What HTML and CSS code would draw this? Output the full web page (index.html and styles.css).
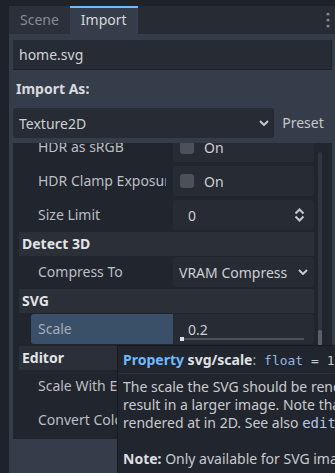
FILE: index.html
```html
<!DOCTYPE html>
<html lang="en">
<head>
  <meta charset="UTF-8">
  <title>Import dock</title>
  <link rel="stylesheet" href="styles.css">
</head>
<body>

  <div class="dock">
    <div class="tabbar">
      <div class="tab">Scene</div>
      <div class="tab active">Import</div>
      <div class="tab-menu">
        <svg width="14" height="28" viewBox="0 0 14 28">
          <circle cx="7" cy="8" r="1.6" fill="#7f848c"/>
          <circle cx="7" cy="14" r="1.6" fill="#7f848c"/>
          <circle cx="7" cy="20" r="1.6" fill="#7f848c"/>
        </svg>
      </div>
    </div>

    <div class="import-body">
      <div class="file-field">home.svg</div>
      <div class="import-as">Import As:</div>

      <div class="type-row">
        <div class="select">
          <span>Texture2D</span>
          <svg class="chevron" width="10" height="6" viewBox="0 0 10 6"><path d="M1 1 L5 5 L9 1" /></svg>
        </div>
        <div class="preset-btn">Preset</div>
      </div>

      <div class="inspector">
        <div class="prop-list">
          <div class="prop">
            <div class="prop-name"><span>HDR as sRGB</span></div>
            <div class="prop-value check-value"><span class="checkbox"></span>On</div>
          </div>
          <div class="prop">
            <div class="prop-name"><span>HDR Clamp Exposure</span></div>
            <div class="prop-value check-value"><span class="checkbox"></span>On</div>
          </div>
          <div class="prop">
            <div class="prop-name"><span>Size Limit</span></div>
            <div class="prop-value spin-value">
              <span>0</span>
              <svg class="updown" width="11" height="14" viewBox="0 0 11 14"><path d="M1.5 5.5 L5.5 1.5 L9.5 5.5 M1.5 8.5 L5.5 12.5 L9.5 8.5" /></svg>
            </div>
          </div>

          <div class="section">Detect 3D</div>
          <div class="prop">
            <div class="prop-name"><span>Compress To</span></div>
            <div class="prop-value option-value">
              <span>VRAM Compress</span>
              <svg class="chevron" width="10" height="6" viewBox="0 0 10 6"><path d="M1 1 L5 5 L9 1" /></svg>
            </div>
          </div>

          <div class="section">SVG</div>
          <div class="prop">
            <div class="prop-name hovered"><span>Scale</span></div>
            <div class="prop-value slider-value">
              <span>0.2</span>
              <div class="slider-track"><div class="slider-grab"></div></div>
            </div>
          </div>

          <div class="section">Editor</div>
          <div class="prop">
            <div class="prop-name"><span>Scale With Editor Scale</span></div>
            <div class="prop-value check-value"><span class="checkbox"></span>On</div>
          </div>
          <div class="prop">
            <div class="prop-name"><span>Convert Colors With Editor Theme</span></div>
            <div class="prop-value check-value"><span class="checkbox"></span>On</div>
          </div>
        </div>
        <div class="scrollbar"><div class="grabber"></div></div>
      </div>
    </div>
  </div>

  <div class="tooltip">
    <div class="tt-title">
      <span class="tt-kind">Property</span> <span class="tt-name">svg/scale</span><span class="tt-colon">:</span><span class="tt-code"> <span class="tt-type">float</span> = 1</span>
    </div>
    <div class="tt-body">
      The scale the SVG should be rendered at, with 1.0 being the original design size. Higher values<br>
      result in a larger image. Note that unlike font oversampling, this affects the size the SVG is<br>
      rendered at in 2D. See also <code>editor/scale_with_editor_scale</code>.<br>
      <br>
      <b>Note:</b> Only available for SVG images.
    </div>
  </div>

</body>
</html>
```

FILE: styles.css
```css
body {
  margin: 0;
  width: 335px;
  height: 473px;
  overflow: hidden;
  position: relative;
  background: #1e2229;
  color: #cdcfd2;
  font-family: "Noto Sans", sans-serif;
  font-size: 14px;
}

.dock {
  margin: 6px 0 0 9px;
  height: 467px;
  background: #363d4a;
}

/* tabs */

.tabbar {
  display: flex;
  height: 28px;
  background: #262b34;
}

.tab {
  padding: 0 11px;
  line-height: 28px;
  color: #868a91;
  background: #2b303a;
}

.tab.active {
  color: #d6d8db;
  background: #363d4a;
  box-shadow: inset 0 2px 0 #70bafa;
}

.tab-menu {
  margin-left: auto;
  width: 14px;
  height: 28px;
}

.tab-menu svg {
  display: block;
}

/* import header */

.import-body {
  padding: 6px 3px 0 4px;
}

.file-field {
  height: 30px;
  line-height: 30px;
  padding-left: 6px;
  background: #262b34;
  box-shadow: inset 0 -1px 0 #1d2128, inset -1px 0 0 #1d2128;
  color: #d2d4d7;
}

.import-as {
  line-height: 38px;
  padding-left: 3px;
  font-weight: bold;
  color: #d8dadd;
}

.type-row {
  display: flex;
  height: 30px;
}

.select {
  width: 261px;
  display: flex;
  align-items: center;
  justify-content: space-between;
  padding: 0 5px 0 6px;
  box-sizing: border-box;
  background: #262b34;
  border-radius: 3px;
}

.chevron path, .updown path {
  fill: none;
  stroke: #c8cacd;
  stroke-width: 2;
}

.preset-btn {
  flex: 1;
  text-align: center;
  line-height: 30px;
  color: #c5c7ca;
}

/* inspector */

.inspector {
  display: flex;
  height: 296px;
  margin-top: 5px;
  padding-left: 6px;
  overflow: hidden;
  background: #21252d;
}

.prop-list {
  flex: 1;
  align-self: flex-start;
  display: flex;
  flex-direction: column;
  margin-top: -13px;
}

.section {
  flex-shrink: 0;
  height: 24px;
  line-height: 24px;
  margin: 0 0 -1px;
  padding-left: 3px;
  background: #2a2f38;
  font-weight: bold;
  color: #e2e4e6;
}

.prop {
  flex-shrink: 0;
  display: flex;
  height: 30px;
  margin: 2px 0;
  padding-left: 12px;
}

.prop-name {
  width: 142px;
  flex-shrink: 0;
  padding: 0 7px;
  box-sizing: border-box;
  line-height: 30px;
  color: #bcbfc3;
}

.prop-name span {
  display: block;
  white-space: nowrap;
  overflow: hidden;
}

.prop-name.hovered {
  background: #3a5068;
  color: #a4adb8;
  border-radius: 3px 0 0 3px;
}

.prop-value {
  flex: 1;
  display: flex;
  align-items: center;
  background: #262b34;
  color: #cdcfd2;
  border-radius: 3px;
}

.check-value {
  padding-left: 7px;
  gap: 10px;
}

.checkbox {
  width: 14px;
  height: 14px;
  border-radius: 3px;
  background: #4b5059;
}

.spin-value {
  justify-content: space-between;
  padding: 0 9px 0 15px;
}

.option-value {
  justify-content: space-between;
  padding: 0 6px 0 6px;
}

.slider-value {
  position: relative;
  padding-left: 15px;
}

.slider-track {
  position: absolute;
  left: 7px;
  right: 10px;
  bottom: 4px;
  height: 2px;
  background: #4b5059;
}

.slider-grab {
  width: 4px;
  height: 4px;
  margin-top: -1px;
  background: #e0e0e0;
}

.scrollbar {
  width: 4px;
  margin: 9px 10px 3px 4px;
  display: flex;
  align-items: flex-end;
  background: #30353f;
  border-radius: 2px;
}

.grabber {
  width: 4px;
  height: 106px;
  background: #5a6069;
  border-radius: 2px;
}

/* tooltip */

.tooltip {
  position: absolute;
  left: 117px;
  top: 345px;
  width: 300px;
  height: 150px;
  background: #21252d;
  border: 1px solid #181b21;
}

.tt-title {
  height: 27px;
  line-height: 27px;
  padding-left: 5px;
  white-space: nowrap;
  border-bottom: 1px solid #2b3039;
}

.tt-kind {
  font-weight: bold;
  color: #70bafa;
}

.tt-name {
  font-weight: bold;
  color: #dfe1e3;
}

.tt-colon {
  color: #a6aaaf;
}

.tt-code {
  font-family: "DejaVu Sans Mono", monospace;
  font-size: 13px;
  color: #c4c7cb;
}

.tt-type {
  color: #8fb8e6;
}

.tt-body {
  padding: 4px 5px;
  line-height: 18px;
  white-space: nowrap;
  color: #c9cbce;
}

.tt-body code {
  font-family: "DejaVu Sans Mono", monospace;
  font-size: 14px;
  color: #b3c6ee;
}

.tt-body b {
  color: #dcdee0;
}
```
